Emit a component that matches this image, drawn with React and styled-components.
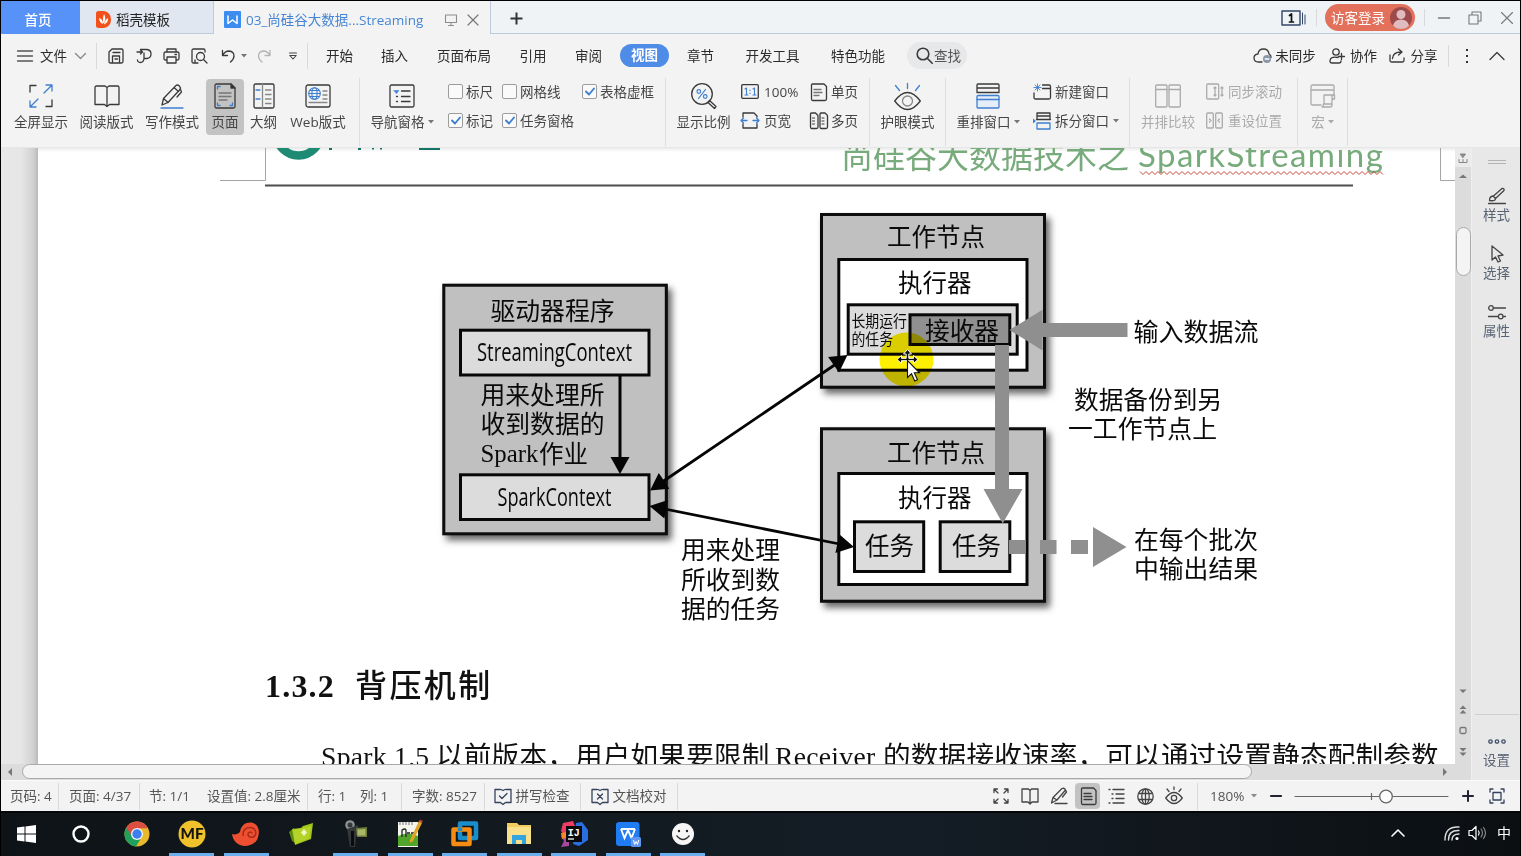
import React from "react";
import styled, { createGlobalStyle, css } from "styled-components";

const UI = `"Open Sans", "Noto Sans CJK SC", sans-serif`;
const CJK = `"Noto Sans CJK SC", sans-serif`;
const SERIF = `"Liberation Serif", "Noto Sans CJK SC", serif`;
const INK = "#454545";
const BLUE = "#3f7fd0";
const MUTED = "#ababab";

const Global = createGlobalStyle`
  * { box-sizing: border-box; }
  html, body { margin: 0; padding: 0; background: #000; overflow: hidden; }
  svg { display: block; flex: none; overflow: visible; }
`;

const Screen = styled.div`
  width: 1521px;
  height: 856px;
  padding: 1px 1px 0 1px;
  background: #000;
  display: flex;
  flex-direction: column;
  overflow: hidden;
  font-family: ${UI};
  font-size: 13.5px;
  line-height: 20px;
  color: #444;
  white-space: nowrap;
`;

/* ---------- tab bar ---------- */
const TabBar = styled.header`
  height: 33px;
  flex: none;
  display: flex;
  background: #eff3f6;
  box-shadow: inset 0 -1px 0 #bfcbdd;
`;
const HomeTab = styled.div`
  width: 79px;
  background: #5792f8;
  color: #fff;
  font-weight: 500;
  display: flex;
  align-items: center;
  justify-content: center;
  padding: 4px 5px 0 0;
`;
const TemplateTab = styled.div`
  width: 133px;
  background: #e0e7f0;
  box-shadow: inset 0 -1px 0 #bfcbdd;
  display: flex;
  align-items: center;
  gap: 5px;
  padding: 4px 0 0 16px;
  color: #222;
`;
const DocTab = styled.div`
  width: 278px;
  background: #f3f3f3;
  border: solid #bfcbdd;
  border-width: 0 1px;
  display: flex;
  align-items: center;
  padding: 4px 0 0 10px;
  color: #4786d4;
`;
const DocTitle = styled.span`
  width: 178px;
  margin: 0 21px 0 5px;
`;
const WinTools = styled.div`
  margin-left: auto;
  display: flex;
  align-items: center;
  padding-right: 7px;
`;
const Login = styled.div`
  width: 90px;
  height: 27px;
  margin: 0 9px 0 8px;
  border-radius: 14px;
  background: #e2705a;
  color: #fff;
  display: flex;
  align-items: center;
  justify-content: space-between;
  padding: 0 3px 0 6px;
`;

/* ---------- shared ---------- */
const Rule = styled.i`
  width: 1px;
  height: ${(p) => p.$h}px;
  margin-left: ${(p) => p.$ml || 0}px;
  margin-right: ${(p) => p.$mr || 0}px;
  background: #d9d9d9;
  flex: none;
`;
const Slot = styled.span`
  width: ${(p) => p.$w}px;
  margin-left: ${(p) => p.$ml || 0}px;
  display: flex;
  flex: none;
  align-items: center;
  justify-content: ${(p) => p.$j || "center"};
`;

/* ---------- menu bar ---------- */
const MenuBar = styled.nav`
  height: 43px;
  flex: none;
  display: flex;
  align-items: center;
  background: #f3f3f3;
  padding: 0 15px 0 16px;
  color: #2b2b2b;
`;
const MenuTab = styled.div`
  width: ${(p) => p.$w}px;
  flex: none;
  text-align: center;
`;
const ActiveMenu = styled(MenuTab)`
  margin: 0 3px;
  height: 23px;
  line-height: 23px;
  border-radius: 12px;
  background: #4f8ce8;
  color: #fff;
  font-weight: 700;
`;
const Search = styled.div`
  width: 60px;
  height: 27px;
  margin-left: 7px;
  border-radius: 14px;
  background: #e7e8ea;
  display: flex;
  align-items: center;
  padding-left: 9px;
  gap: 1px;
  color: #555;
`;
const MenuEnd = styled.div`
  margin-left: auto;
  display: flex;
  align-items: center;
`;

/* ---------- ribbon ---------- */
const Ribbon = styled.section`
  height: 71px;
  flex: none;
  display: flex;
  background: #f3f3f3;
  padding-left: 7px;
  border-bottom: 1px solid #e6e6e6;
`;
const RibbonButton = styled.div`
  width: ${(p) => p.$w}px;
  margin-left: ${(p) => p.$ml || 0}px;
  flex: none;
  height: 56px;
  margin-top: 2px;
  padding-top: 4px;
  border-radius: 4px;
  display: flex;
  flex-direction: column;
  align-items: center;
  color: ${(p) => (p.$off ? MUTED : INK)};
  ${(p) => p.$on && css`background: #c3c3c3;`}
`;
const IconBox = styled.div`
  height: 26px;
  display: flex;
  align-items: center;
`;
const ButtonLabel = styled.div`
  margin-top: 3px;
  display: flex;
  align-items: center;
  gap: 3px;
`;
const Stack = styled.div`
  width: ${(p) => p.$w}px;
  margin-left: ${(p) => p.$ml || 0}px;
  flex: none;
  color: ${(p) => (p.$off ? MUTED : INK)};
`;
const StackRow = styled.div`
  height: 29px;
  display: flex;
  align-items: center;
`;
const Tick = styled.span`
  width: 15px;
  height: 15px;
  margin-right: 3px;
  border: 1px solid #9c9c9c;
  border-radius: 2px;
  background: #fafafa;
  display: flex;
  align-items: center;
  justify-content: center;
`;
const GroupRule = styled.i`
  width: 1px;
  height: 68px;
  margin: 1px 0 0 ${(p) => p.$ml || 0}px;
  background: #dedede;
  flex: none;
`;

/* ---------- workspace ---------- */
const Workspace = styled.div`
  height: 632px;
  flex: none;
  display: flex;
`;
const DocColumn = styled.div`
  width: 1454px;
  display: flex;
  flex-direction: column;
`;
const Viewport = styled.main`
  height: 616px;
  display: flex;
  overflow: hidden;
  background: linear-gradient(to right, #e8e8e8 0, #e6e6e6 20px, #d2d2d2 32px, #b9b9b9 37px, #b9b9b9 38px);
`;
const Page = styled.article`
  width: 1417px;
  margin-left: 37px;
  background: #fff;
  flex: none;
  display: flex;
  flex-direction: column;
`;
const PageHeader = styled.div`
  position: relative;
  height: 42px;
  flex: none;
  overflow: hidden;
  background: linear-gradient(to bottom, #ececec 0, #fff 4px);
`;
const HeaderArt = styled.svg`
  position: absolute;
  inset: 0;
`;
const HeaderTitle = styled.div`
  display: flex;
  justify-content: flex-end;
  padding-right: 71px;
  margin-top: -17px;
  font-size: 32px;
  line-height: 46px;
  color: #78ab7c;
  font-family: ${CJK};
  font-weight: 400;
`;
const HeaderName = styled.span`
  margin-left: 9px;
  width: 246px;
  font-family: Lato, sans-serif;
  font-size: 33px;
  letter-spacing: 1.45px;
`;
const Heading = styled.h3`
  margin: 20px 0 0 227px;
  height: 52px;
  display: flex;
  align-items: center;
  font: 700 32px/52px ${SERIF};
  letter-spacing: 1.2px;
  color: #111;
`;
const HeadingText = styled.span`
  margin-left: 20px;
  letter-spacing: 2.4px;
  font-weight: 500;
`;
const Para = styled.p`
  margin: 23px 0 0 283px;
  font: 400 27.6px/44px ${SERIF};
  color: #111;
  display: flex;
`;
const Run = styled.span`
  width: ${(p) => p.$w}px;
  flex: none;
  letter-spacing: ${(p) => p.$ls || 0}px;
`;

const HScroll = styled.div`
  height: 16px;
  background: #dcdcdc;
  display: flex;
  align-items: center;
  padding: 0 6px;
`;
const HThumb = styled.div`
  width: 1230px;
  height: 15px;
  margin: 0 0 1px 9px;
  border: 1px solid #a9a9a9;
  border-radius: 8px;
  background: #f4f4f4;
`;
const VScroll = styled.div`
  width: 16px;
  background: #dcdcdc;
  display: flex;
  flex-direction: column;
  align-items: center;
`;
const RulerToggle = styled.div`
  width: 16px;
  height: 19px;
  background: #ebebeb;
  display: flex;
  align-items: center;
  justify-content: center;
`;
const VThumb = styled.div`
  width: 15px;
  height: 49px;
  margin: 39px 0 auto;
  border: 1px solid #a9a9a9;
  border-radius: 8px;
  background: #f4f4f4;
`;
const VArrow = styled.div`
  height: 21px;
  padding-top: 6px;
`;
const VSteps = styled.div`
  height: 92px;
`;
const SidePanel = styled.aside`
  width: 49px;
  background: #e8e8e8;
  border-left: 1px solid #efefef;
  display: flex;
  flex-direction: column;
  align-items: center;
  padding: 12px 0 9px 1px;
  color: #586374;
`;
const Grip = styled.div`
  width: 18px;
  height: 4px;
  border: solid #b4b4b4;
  border-width: 1px 0;
  margin-bottom: 23px;
`;
const SideTool = styled.div`
  height: 58px;
  display: flex;
  flex-direction: column;
  align-items: center;
`;
const SideIcon = styled.div`
  height: 18px;
  display: flex;
  align-items: center;
`;
const SideFoot = styled.div`
  margin-top: auto;
  width: 44px;
  height: 57px;
  border-top: 1px solid #cfcfcf;
  padding-top: 17px;
  display: flex;
  flex-direction: column;
  align-items: center;
`;

/* ---------- status bar ---------- */
const StatusBar = styled.footer`
  height: 31px;
  flex: none;
  background: #f3f3f3;
  border-top: 1px solid #fafafa;
  display: flex;
  align-items: center;
  padding: 0 15px 0 9px;
  color: #555;
  font-size: 13.5px;
`;
const Info = styled.span`
  width: ${(p) => p.$w}px;
  flex: none;
  letter-spacing: ${(p) => p.$ls || 0}px;
`;
const StatusEnd = styled.div`
  margin-left: auto;
  display: flex;
  align-items: center;
`;
const ViewMode = styled.div`
  width: 25px;
  height: 26px;
  margin-right: 3.8px;
  border-radius: 4px;
  display: flex;
  align-items: center;
  justify-content: center;
  background: ${(p) => (p.$on ? "#c3c3c3" : "transparent")};
`;

/* ---------- taskbar ---------- */
const Taskbar = styled.div`
  height: 45px;
  flex: none;
  background: linear-gradient(to right, #0e1317 0, #121a1f 500px, #141d26 900px, #0f1419 1300px, #0b0f12 100%);
  border-top: 2px solid #050607;
  display: flex;
  padding-left: 0;
`;
const TaskCell = styled.div`
  width: 54.55px;
  height: 43px;
  flex: none;
  display: flex;
  flex-direction: column;
  align-items: center;
  justify-content: space-between;
  padding-top: 5.5px;
`;
const OpenMark = styled.i`
  width: 45px;
  height: 3px;
  background: ${(p) => (p.$show ? "#6aaeee" : "transparent")};
`;
const Tray = styled.div`
  margin-left: auto;
  display: flex;
  align-items: center;
  padding: 0 9px 3px 0;
  color: #fff;
  font-size: 14px;
`;

/* ---------- small drawings ---------- */
const Ico = ({ w, h, c = "#3a3a3a", sw = 1.3, fill = "none", children }) => (
  <svg width={w} height={h} viewBox={`0 0 ${w} ${h}`} fill={fill} stroke={c} strokeWidth={sw} strokeLinecap="round" strokeLinejoin="round">
    {children}
  </svg>
);
const Caret = ({ c = "#777" }) => (
  <Ico w={6} h={4} c="none" fill={c}><path d="M0 0h6L3 3.6z" /></Ico>
);
const Box = ({ on }) => (
  <Tick>{on && <Ico w={10} h={9} c={BLUE} sw={1.9}><path d="M1 4.5l3 3L9 1.5" /></Ico>}</Tick>
);

const PenIcon = () => (
  <Ico w={26} h={26}>
    <path d="M3 22l1.500-6.500L17 2.500c2-1.500 5.500 1.500 4 4L9 19.500zM4.500 15.500l4.500 4M15 4.500l4.500 4M21.500 6.500l1 2.500-4.500 5" />
    <path d="M2 25h22" stroke={BLUE} />
  </Ico>
);
const Doc = ({ x = 0, y = 0, w = 14, h = 17 }) => (
  <path d={`M${x + 1.5} ${y}h${w - 5}l2.500 2.500v${h - 4.5}q0 1.500 -1.500 1.500h${-(w - 4)}q-1 0 -1 -1.500v${-(h - 3)}q0 -1 1 -1z`} />
);

/* ---------- diagram ---------- */
const T = ({ x, y, w, s = 24.7, children, font = CJK, weight = 400, base }) => (
  <text x={x} y={base ? y : y - 0.8 + s * 0.37} fontSize={s} textLength={w} lengthAdjust="spacingAndGlyphs" fontFamily={font} fontWeight={weight} fill="#0a0a0a">
    {children}
  </text>
);
const B = ({ x1, y1, x2, y2, fill, shadow }) => (
  <rect x={x1 + 1.5} y={y1 + 1.5} width={x2 - x1 - 3} height={y2 - y1 - 3} fill={fill} stroke="#080808" strokeWidth="3" filter={shadow ? "url(#cast)" : undefined} />
);
const Head = ({ x, y, a, l = 17, w = 19 }) => (
  <path d={`M0 0L${-l} ${-w / 2}V${w / 2}z`} transform={`translate(${x} ${y}) rotate(${a})`} fill="#050505" />
);

const Diagram = () => (
  <svg width="1417" height="450" viewBox="38 190 1417 450">
    <defs>
      <filter id="cast" x="-10%" y="-10%" width="125%" height="125%">
        <feDropShadow dx="4" dy="5" stdDeviation="3.5" floodColor="#000" floodOpacity="0.6" />
      </filter>
    </defs>
    <B x1={442.3} y1={283.7} x2={667.8} y2={535.3} fill="#c0c0c0" shadow />
    <T x={490.5} y={311.5} w={124}>驱动器程序</T>
    <B x1={459} y1={328.7} x2={650.5} y2={376.5} fill="#dcdcdc" />
    <T x={477} y={360.7} w={155} s={25} font={`"Open Sans", sans-serif`} weight={500} base>StreamingContext</T>
    <T x={480.5} y={395.5} w={124}>用来处理所</T>
    <T x={480.5} y={425} w={124}>收到数据的</T>
    <T x={480.5} y={462} w={58} s={25} font={SERIF} base>Spark</T>
    <T x={539} y={454.5} w={49}>作业</T>
    <B x1={459} y1={473.3} x2={650.5} y2={521} fill="#dcdcdc" />
    <T x={497.5} y={505.7} w={114} s={25} font={`"Open Sans", sans-serif`} weight={500} base>SparkContext</T>
    <path d="M620 376v84" stroke="#050505" strokeWidth="3" />
    <Head x={620} y={474} a={90} />

    <B x1={820} y1={213} x2={1046} y2={388.7} fill="#c0c0c0" shadow />
    <T x={887} y={238} w={98}>工作节点</T>
    <B x1={837.3} y1={258} x2={1028.5} y2={371.7} fill="#fff" />
    <T x={898} y={284} w={73.5}>执行器</T>
    <B x1={846.7} y1={303.3} x2={1018.7} y2={355.7} fill="#dcdcdc" />
    <T x={851.5} y={322} w={55.5} s={15.5}>长期运行</T>
    <T x={851.5} y={340.5} w={41.5} s={15.5}>的任务</T>
    <B x1={908.5} y1={313.3} x2={1011.3} y2={346} fill="#909090" />
    <T x={925} y={332} w={74}>接收器</T>

    <B x1={820} y1={427.3} x2={1046} y2={602.7} fill="#c0c0c0" shadow />
    <T x={887} y={453.5} w={98}>工作节点</T>
    <B x1={837.3} y1={472} x2={1028.5} y2={586} fill="#fff" />
    <T x={898} y={498.5} w={73.5}>执行器</T>
    <B x1={853} y1={520.3} x2={925.2} y2={573} fill="#dcdcdc" />
    <T x={865} y={547} w={49}>任务</T>
    <B x1={938.7} y1={520.3} x2={1011.3} y2={573} fill="#dcdcdc" />
    <T x={952} y={547} w={49}>任务</T>

    <path d="M660 483.500L836 364M662 508.500L842 544.500" stroke="#050505" strokeWidth="2.8" />
    <Head x={650} y={490.5} a={146} />
    <Head x={847.5} y={355} a={-35} />
    <Head x={649.5} y={506} a={191} />
    <Head x={854} y={547} a={11.5} />

    <g fill="#8f8f8f">
      <path d="M995 345h14v144h13.500l-19.800 34.500L983.500 489H995z" />
      <path d="M1009.500 330L1042.500 309.700V323h85v14h-85v13.500z" />
      <path d="M1009 540h16.500v14H1009zM1040 540h16.500v14H1040zM1071 540h17v14h-17zM1093 527l33.500 20-33.500 20z" />
    </g>

    <T x={1133.5} y={332.5} w={125}>输入数据流</T>
    <T x={1074} y={400.5} w={148}>数据备份到另</T>
    <T x={1068} y={430} w={149}>一工作节点上</T>
    <T x={1134} y={540.5} w={124}>在每个批次</T>
    <T x={1134} y={570} w={124}>中输出结果</T>
    <T x={681} y={551} w={99}>用来处理</T>
    <T x={681} y={580.5} w={99}>所收到数</T>
    <T x={681} y={610} w={99}>据的任务</T>

    <circle cx="906.500" cy="359.500" r="27" fill="#fdef00" style={{ mixBlendMode: "multiply" }} />
    <path d="M907.500 349.500l4 4.500h-2.700v4.300h4.700v-2.800l4.500 4-4.500 4v-2.800h-12v2.800l-4.500-4 4.500-4v2.800h4.700v-4.300h-2.700z" fill="#111" stroke="#fff" strokeWidth="1" />
    <path d="M907.500 360.500v17l4-3.700 3.200 7.200 2.800-1.300-3.200-6.900h5.200z" fill="#fff" stroke="#111" strokeWidth="1.100" />
  </svg>
);

const zig = Array.from({ length: 82 }, (_, i) => `${i ? "L" : "M"}${1102 + i * 3} ${i % 2 ? 26.5 : 23.5}`).join("");

/* ---------- taskbar icons: [running, drawing] ---------- */
const taskIcons = [
  [0, <g fill="#fff"><path d="M3 8.500l7.500-1v7H3zM11.500 7.400l10.500-1.500v8.600H11.500zM3 15.500h7.500v7l-7.500-1zM11.500 15.500H22v8.600l-10.500-1.500z" /></g>],
  [0, <circle cx="12" cy="15" r="7.500" fill="none" stroke="#fff" strokeWidth="2.400" />],
  [0, <g><circle cx="14" cy="15" r="12.500" fill="#e8b92c" /><path d="M3.200 8.700A12.500 12.500 0 0 0 13 27.500l6-10z" fill="#1fa05c" /><path d="M14 9.200H25A12.500 12.500 0 0 0 3.200 8.700L9 17z" fill="#dc4e41" /><circle cx="14" cy="15" r="6" fill="#f5f5f5" /><circle cx="14" cy="15" r="4.700" fill="#3d7ff0" /></g>],
  [1, <g><circle cx="14" cy="15" r="13.500" fill="#efc22c" /><text x="14" y="20.300" textAnchor="middle" fontFamily="Lato, sans-serif" fontWeight="900" fontSize="15.500" textLength="23" lengthAdjust="spacingAndGlyphs" fill="#15130c">MF</text></g>],
  [1, <g><path d="M0 15c3 1 6 0 8-2C9 6 14 3 19 3.500c6 .500 9 7 7.500 12.500-1 8-7 11-14.500 11C5 26 1 22 0 15z" fill="#ee4f30" /><path d="M20 14.500c0-2-4-2-4 1s5 4 7 1 0-8-5-8-8 4-6.500 8.500" fill="none" stroke="#a82c1c" strokeWidth="1.500" /></g>],
  [0, <g><path d="M2 13l5-4 3 16-5-3z" fill="#5f8a10" /><path d="M5 10l9-1 2-2 10-3-2 16-16 6z" fill="#a2c617" /><path d="M6 11l18-4-2 12-14 6z" fill="#c0dc35" opacity=".6" /><path d="M17 10l3 3.500-3 3.500-3-3.500z" fill="#f0f6c8" /></g>],
  [1, <g><circle cx="8" cy="6" r="4.800" fill="#8d9192" /><circle cx="8" cy="6" r="2.500" fill="#36393a" /><path d="M5 10l11-4 1 10-3 1-1 11H8z" fill="#34383a" /><path d="M9 12l3 0v15H9z" fill="#0a0b0c" /><path d="M14 9l11-1v10H15z" fill="#6d7a38" /><path d="M15.500 10.500l8-.500v6.500h-8z" fill="#a9b868" /></g>],
  [1, <g><path d="M2 3h20v25H2z" fill="#f4f6ee" /><path d="M2 17q10-5 20 0v10H2z" fill="#51a52a" /><path d="M4 3v3M7 3v3M10 3v3M13 3v3M16 3v3" stroke="#777" /><path d="M6 18v-7q3-2 4 0v7M11 14h3M15 14h3" fill="none" stroke="#222" strokeWidth="1.300" /><path d="M14 21L23 2l3 2-9 18-3 2z" fill="#e2a52a" /><path d="M23 2l3 2 .800-2-2.500-1.500z" fill="#c4453a" /></g>],
  [1, <g fill="none" strokeWidth="4.500" strokeLinejoin="round"><rect x="9" y="4.500" width="16" height="14.500" stroke="#1a8dcb" /><rect x="2.500" y="10.500" width="16" height="14.500" stroke="#f78c12" /><path d="M9 12V8.500" stroke="#1a8dcb" /></g>],
  [1, <g><path d="M2 4h10l2 2h12v19H2z" fill="#f1cd60" /><path d="M2 8h24v17H2z" fill="#fbe08c" /><path d="M7 25v-9h14v9h-4v-4h-6v4z" fill="#33a4dd" /></g>],
  [1, <g><path d="M3 4l10-2 3 8-10 8-5-6z" fill="#ee3d62" /><path d="M1 17l8-4v14l-8 1 3-6z" fill="#a4499b" /><path d="M16 4l6-1 6 8v10l-9 6-6-2z" fill="#2a6fe0" /><path d="M1 14l5-1v6l-4 1z" fill="#f7862b" /><rect x="6" y="7" width="16" height="16" fill="#0b0b0b" /><text x="7.800" y="16.500" fontFamily="Liberation Mono, monospace" fontWeight="700" fontSize="10" fill="#fff">IJ</text><path d="M8 20h6" stroke="#fff" strokeWidth="1.300" /></g>],
  [1, <g><rect x="2" y="3" width="23.500" height="24" rx="3" fill="#1f7cf2" /><path d="M7 10l3.500 9 3.500-8 3.500 8 3.500-9M7 10h14" fill="none" stroke="#fff" strokeWidth="1.900" /><rect x="17" y="18" width="10" height="10" rx="1.500" fill="#5e96f0" /><path d="M19.500 21l1.200 4.500 1.400-3 1.400 3 1.200-4.500" fill="none" stroke="#fff" strokeWidth="1" /></g>],
  [1, <g><circle cx="14" cy="15" r="11" fill="#f6f6f6" /><circle cx="10" cy="12" r="1.200" fill="#222" /><circle cx="18" cy="12" r="1.200" fill="#222" /><path d="M7.500 16.500q6.500 8 13 0" fill="none" stroke="#333" strokeWidth="1.300" /></g>],
];

export default function App() {
  return (
    <Screen>
      <Global />
      <TabBar>
        <HomeTab>首页</HomeTab>
        <TemplateTab>
          <Ico w={15} h={17} c="none"><path d="M0 2.500Q0 0 2.500 0H8q7 1.500 7 8.500T8 17H2.500Q0 17 0 14.500z" fill="#f2511b" /><path d="M8 3q3 5-.500 9.500Q6 9 8 3zM3 7q4 1 4 6-3.500-1-4-6zM12 7q.500 4.500-4 6.500Q8.500 9.500 12 7z" fill="#fff" /></Ico>
          <span>稻壳模板</span>
        </TemplateTab>
        <DocTab>
          <Ico w={17} h={17} c="none"><rect width="17" height="17" rx="1" fill="#3d8cf0" /><path d="M4 5v7.500L8.500 9l4.500 3.500V5" stroke="#fff" strokeWidth="1.500" fill="none" /></Ico>
          <DocTitle>03_尚硅谷大数据...Streaming</DocTitle>
          <Ico w={12} h={12} c="#8d8d8d" sw={1.1}><path d="M.500 1h11v7.500H.500zM6 8.500V11M3.500 11.500h5" /></Ico>
          <Slot $w={12} $ml={10}><Ico w={12} h={12} c="#777" sw={1.2}><path d="M1 1l10 10M11 1L1 11" /></Ico></Slot>
        </DocTab>
        <Slot $w={13} $ml={19}><Ico w={13} h={17} c="#333" sw={2}><path d="M6.500 3.500v12M.500 9.500h12" strokeLinecap="butt" /></Ico></Slot>
        <WinTools>
          <Ico w={24} h={16} c="#34466a" sw={1.4}><rect x="0" y="1" width="18" height="14" /><path d="M20.500 3v11M23 5v9" strokeWidth="1" /><path d="M7.500 5.500L9.500 4v8M7.500 12h4" stroke="#111" strokeWidth="1.700" /></Ico>
          <Rule $h={17} $ml={10} />
          <Login>访客登录
            <Ico w={22} h={22} c="none"><circle cx="11" cy="11" r="11" fill="#9d4a4c" /><circle cx="11" cy="7.500" r="4.500" fill="#e0bcc0" /><path d="M3 18.500q1.500-6 8-6t8 6q-3 3.500-8 3.500t-8-3.500z" fill="#e0bcc0" /></Ico>
          </Login>
          <Rule $h={17} $mr={13} />
          <Ico w={12} h={12} c="#777"><path d="M.500 6h11" /></Ico>
          <Slot $w={14} $ml={18}><Ico w={14} h={14} c="#777" sw={1.1}><path d="M1 4h9v9H1zM4 4V1h9v9h-3" /></Ico></Slot>
          <Slot $w={12} $ml={19}><Ico w={12} h={12} c="#777" sw={1.1}><path d="M.500.500l11 11M11.500.500l-11 11" /></Ico></Slot>
        </WinTools>
      </TabBar>

      <MenuBar>
        <Ico w={16} h={12} c="#555"><path d="M.500 1h15M.500 6h15M.500 11h15" /></Ico>
        <Slot $w={27} $ml={7}>文件</Slot>
        <Slot $w={11} $ml={8}><Ico w={11} h={6} c="#888"><path d="M.500.500l5 5 5-5" /></Ico></Slot>
        <Rule $h={26} $ml={10} />
        <Slot $w={16} $ml={11}><Ico w={16} h={16}><path d="M1 13.500V4l3-3h9.500Q15 1 15 2.500V13.500q0 1.500-1.500 1.500h-11Q1 15 1 13.500zM4.500 15V8h7v7M5 4.500h7M7 11h2.500" /></Ico></Slot>
        <Slot $w={16} $ml={12}><Ico w={16} h={16}><path d="M4.500 1.500H11q4 .500 4 4.500T11 10.500H8V5M1 4h5M4.500 2l2 2-2 2M8 10.500Q7.500 14.500 4.500 14.500T1.500 12" /></Ico></Slot>
        <Slot $w={17} $ml={11}><Ico w={17} h={16}><path d="M4 4V1h9v3M4 12H2.500Q1 12 1 10.500V5.500Q1 4 2.500 4h12Q16 4 16 5.500v5q0 1.500-1.500 1.500H13M4 9h9v6H4zM12 6.500h1.500" /></Ico></Slot>
        <Slot $w={17} $ml={11}><Ico w={17} h={16}><path d="M7 15H2.500Q1 15 1 13.500v-11Q1 1 2.500 1h10Q14 1 14 2.500V4M4 12v3" /><circle cx="9.500" cy="8.500" r="4" /><path d="M12.500 11.500l3.500 3.500" /></Ico></Slot>
        <Slot $w={15} $ml={13}><Ico w={15} h={14}><path d="M1.500 1.500v5h5M1.500 6.500Q4 2 8 2q5 .500 5 5 0 3-3.500 6" /></Ico></Slot>
        <Slot $w={7} $ml={4}><Caret /></Slot>
        <Slot $w={14} $ml={10}><Ico w={14} h={14} c="#b4b4b4"><path d="M13 1.500v5H8M13 6.500Q10.500 2 6.500 2q-5 .500-5 5 0 3 3.500 6" /></Ico></Slot>
        <Slot $w={10} $ml={17}><Ico w={8} h={8} c="#444" sw={1.1}><path d="M.500 1h7M.800 3.500h6.400L4 7z" /></Ico></Slot>
        <Rule $h={26} $ml={9} $mr={4} />
        <MenuTab $w={55}>开始</MenuTab>
        <MenuTab $w={55}>插入</MenuTab>
        <MenuTab $w={84}>页面布局</MenuTab>
        <MenuTab $w={54}>引用</MenuTab>
        <MenuTab $w={57}>审阅</MenuTab>
        <ActiveMenu $w={49}>视图</ActiveMenu>
        <MenuTab $w={57}>章节</MenuTab>
        <MenuTab $w={87}>开发工具</MenuTab>
        <MenuTab $w={84}>特色功能</MenuTab>
        <Search><Ico w={17} h={17} sw={1.6}><circle cx="7" cy="7" r="5.800" /><path d="M11.200 11.200l5 5" /></Ico>查找</Search>
        <MenuEnd>
          <Ico w={19} h={15}><path d="M9 14H5.500Q1 14 1 10q0-3.500 4-4 .500-5 5.500-5T16 6q2 1 2 3.500" /><circle cx="14" cy="11" r="4" fill="#8b97ab" stroke="none" /><path d="M12.200 11h3.600" stroke="#fff" /></Ico>
          <Slot $w={41} $ml={3.5}>未同步</Slot>
          <Slot $w={16} $ml={13}><Ico w={16} h={16}><circle cx="7" cy="4" r="3.200" /><path d="M9 9.500Q1 8 1 13q0 2 2 2h7q2 0 2-2M12.500 5.500v6M9.500 8.500h6" /></Ico></Slot>
          <Slot $w={27} $ml={5}>协作</Slot>
          <Slot $w={17} $ml={12}><Ico w={17} h={15}><path d="M1 7v5.500Q1 14 2.500 14h11q1.500 0 1.500-1.500V10M3.500 10.500Q4 4 12 4M9.500 1L13 4 9.500 7" /></Ico></Slot>
          <Slot $w={27} $ml={4.5}>分享</Slot>
          <Rule $h={22} $ml={10.5} />
          <Slot $w={4} $ml={16}><Ico w={4} h={14} c="none" fill="#333"><path d="M1 0h2v2H1zM1 6h2v2H1zM1 12h2v2H1z" /></Ico></Slot>
          <Slot $w={16} $ml={20}><Ico w={16} h={8}><path d="M1 7.500l7-7 7 7" /></Ico></Slot>
        </MenuEnd>
      </MenuBar>

      <Ribbon>
        <RibbonButton $w={66}>
          <IconBox><Ico w={24} h={24}><path d="M1 8V1.500h6M23 16v6.500h-6" /><path d="M15 9l8-8M17 1h6v6M9 15l-8 8M1 17v6h6" stroke={BLUE} /></Ico></IconBox>
          <ButtonLabel>全屏显示</ButtonLabel>
        </RibbonButton>
        <RibbonButton $w={65}>
          <IconBox><Ico w={26} h={24}><path d="M2.500 2H11l2 1.500L15 2h8.500Q25 2 25 3.500v17H15.500L13 22.500 10.500 20.500H1v-17Q1 2 2.500 2zM13 3.500v19" /></Ico></IconBox>
          <ButtonLabel>阅读版式</ButtonLabel>
        </RibbonButton>
        <RibbonButton $w={66}>
          <IconBox><PenIcon /></IconBox>
          <ButtonLabel>写作模式</ButtonLabel>
        </RibbonButton>
        <RibbonButton $w={38} $ml={1} $on>
          <IconBox><Ico w={22} h={26}><path d="M2.500 1H17l4 4v18.500q0 1.500-1.500 1.500h-17Q1 25 1 23.500v-21Q1 1 2.500 1z" /><path d="M17 1v4h4z" fill="#222" /><path d="M5 10h12M5 13.500h12M5 17h8" stroke="#777" /><path d="M3.500 6V3.500H6M3.500 20v2.500H6M16 22.500h2.500V20" stroke={BLUE} /></Ico></IconBox>
          <ButtonLabel>页面</ButtonLabel>
        </RibbonButton>
        <RibbonButton $w={39}>
          <IconBox><Ico w={22} h={26}><rect x="1" y="1" width="20" height="24" rx="1.500" /><path d="M9.500 1v24" stroke="#888" /><path d="M3 7h4M3 16h4" stroke={BLUE} /><path d="M12.500 7h5.500M12.500 11.500h5.500M12.500 16h5.500M12.500 20.500h5.500" stroke="#888" /></Ico></IconBox>
          <ButtonLabel>大纲</ButtonLabel>
        </RibbonButton>
        <RibbonButton $w={70}>
          <IconBox><Ico w={26} h={24}><rect x="1" y="1" width="24" height="22" rx="2" /><g stroke={BLUE} strokeWidth="1.100"><circle cx="9.500" cy="9.500" r="5.800" /><ellipse cx="9.500" cy="9.500" rx="2.600" ry="5.800" /><path d="M4 9.500h11M5 6.500h9M5 12.500h9" /></g><path d="M18 7h4M18 11h4M4 18.500h18M18 15h4" stroke="#888" /></Ico></IconBox>
          <ButtonLabel>Web版式</ButtonLabel>
        </RibbonButton>
        <GroupRule $ml={6} />
        <RibbonButton $w={84}>
          <IconBox><Ico w={26} h={24}><rect x="1" y="1" width="24" height="22" rx="1.500" /><path d="M5 6.500h5L7.500 9.500z" fill={BLUE} stroke={BLUE} strokeWidth=".5" /><path d="M12.500 7H21M7.500 12.500h1M12.500 12.500H21M7.500 17.500h1M12.500 17.500H21" /></Ico></IconBox>
          <ButtonLabel>导航窗格<Caret /></ButtonLabel>
        </RibbonButton>
        <Stack $w={54} $ml={4}>
          <StackRow><Box />标尺</StackRow>
          <StackRow><Box on />标记</StackRow>
        </Stack>
        <Stack $w={80}>
          <StackRow><Box />网格线</StackRow>
          <StackRow><Box on />任务窗格</StackRow>
        </Stack>
        <Stack $w={83}>
          <StackRow><Box on />表格虚框</StackRow>
        </Stack>
        <GroupRule />
        <RibbonButton $w={75}>
          <IconBox><Ico w={26} h={26}><circle cx="11" cy="11" r="10.300" /><path d="M18.500 17.500l6.500 6-1.500 2-6.500-6z" /><g stroke={BLUE} strokeWidth="1.200"><path d="M14.500 6.500l-7 9" /><circle cx="7.800" cy="8.500" r="1.800" /><circle cx="14.200" cy="13.500" r="1.800" /></g></Ico></IconBox>
          <ButtonLabel>显示比例</ButtonLabel>
        </RibbonButton>
        <Stack $w={68}>
          <StackRow><Slot $w={23} $j="flex-start"><Ico w={18} h={15}><rect x=".700" y=".700" width="16.600" height="13.600" rx="1" /><g stroke={BLUE} strokeWidth="1.100"><path d="M4 5l1.500-1v7M4 11h3M12 5l1.500-1v7M12 11h3M9 6v.500M9 9v.500" /></g></Ico></Slot>100%</StackRow>
          <StackRow><Slot $w={23} $j="flex-start"><Ico w={18} h={17}><path d="M2 5V1h11l3 3v1M2 12v4h14v-4" /><path d="M0 8.500h6M2.500 6L0 8.500 2.500 11M18 8.500h-6M15.500 6L18 8.500 15.500 11" stroke={BLUE} /></Ico></Slot>页宽</StackRow>
        </Stack>
        <Stack $w={59} $ml={1}>
          <StackRow><Slot $w={21} $j="flex-start"><Ico w={16} h={18}><Doc x={1} y={1} w={16.5} h={17} /><path d="M4 6.500h7M4 9.500h8M4 12.500h5" stroke="#777" /></Ico></Slot>单页</StackRow>
          <StackRow><Slot $w={21} $j="flex-start"><Ico w={17} h={17}><Doc x={0} y={1} w={9} h={16} /><Doc x={9.5} y={1} w={9} h={16} /><path d="M2.500 6h2M2.500 9h2M2.500 12h2M12 6h2M12 9h2M12 12h2" stroke="#777" /></Ico></Slot>多页</StackRow>
        </Stack>
        <GroupRule />
        <RibbonButton $w={75}>
          <IconBox><Ico w={27} h={27}><path d="M.700 18q12.800-17 25.600 0-12.800 17-25.600 0z" /><circle cx="13.500" cy="18" r="5" stroke="#888" /><path d="M1.500 2.500l4 5M13.500.500v5M25.500 2.500l-4 5" stroke={BLUE} /></Ico></IconBox>
          <ButtonLabel>护眼模式</ButtonLabel>
        </RibbonButton>
        <GroupRule />
        <RibbonButton $w={84}>
          <IconBox><Ico w={24} h={26}><path d="M1 9.500V2q0-1 1-1h20q1 0 1 1v7.500M1 5h22M1 9.500h22" /><g stroke={BLUE}><rect x="1" y="12.500" width="22" height="12.500" rx="1" fill="#e4edf8" /><path d="M1 16.500h22" /></g></Ico></IconBox>
          <ButtonLabel>重排窗口<Caret /></ButtonLabel>
        </RibbonButton>
        <Stack $w={96} $ml={3}>
          <StackRow><Slot $w={22} $j="flex-start"><Ico w={18} h={16}><path d="M9.500 1H16q1.500 0 1.500 1.500v11q0 1.500-1.500 1.500H2.500Q1 15 1 13.500V9M9.500 4.500h8" /><path d="M4.500 0v7M1 3.500h7M2 1l5 5M7 1L2 6" stroke={BLUE} strokeWidth=".9" /></Ico></Slot>新建窗口</StackRow>
          <StackRow><Slot $w={22} $j="flex-start"><Ico w={18} h={18}><path d="M4 7.500V1h13v6.500M4 4h13M3.500 7.500h14" /><path d="M4 11h13v6H4z" stroke={BLUE} /><path d="M0 6.500l3 2.500-3 2.500z" fill={BLUE} stroke="none" /></Ico></Slot>拆分窗口<Slot $w={6} $ml={4}><Caret /></Slot></StackRow>
        </Stack>
        <GroupRule />
        <RibbonButton $w={76} $off>
          <IconBox><Ico w={26} h={24} c={MUTED}><rect x=".700" y="1" width="11.300" height="22" rx="1" /><rect x="14" y="1" width="11.300" height="22" rx="1" /><path d="M1 5.500h11M14 5.500h11" /></Ico></IconBox>
          <ButtonLabel>并排比较</ButtonLabel>
        </RibbonButton>
        <Stack $w={91} $off>
          <StackRow><Slot $w={22} $j="flex-start"><Ico w={17} h={17} c={MUTED}><rect x=".700" y="1" width="12" height="15" rx="1" /><path d="M9 4v9M8 5l1-1 1 1M8 12l1 1 1-1M16 4v9M15 5l1-1 1 1M15 12l1 1 1-1" /></Ico></Slot>同步滚动</StackRow>
          <StackRow><Slot $w={22} $j="flex-start"><Ico w={17} h={17} c={MUTED}><rect x=".700" y="1" width="6.600" height="15" rx="1" /><rect x="9.700" y="1" width="6.600" height="15" rx="1" /><path d="M3.500 7L5 8.500 3.500 10M13.500 7L12 8.500l1.500 1.500" /></Ico></Slot>重设位置</StackRow>
        </Stack>
        <GroupRule />
        <RibbonButton $w={49} $off>
          <IconBox><Ico w={25} h={24} c={MUTED}><path d="M11 21H2.500Q1 21 1 19.500v-17Q1 1 2.500 1h20Q24 1 24 2.500V11M1 6h23" /><path d="M14 20v-9h10.500M22 11v10q0 2-2 2h-8q1.500-.500 1.500-3H22M22 15h2.500v-4" /></Ico></IconBox>
          <ButtonLabel>宏<Caret c="#aaa" /></ButtonLabel>
        </RibbonButton>
        <GroupRule />
      </Ribbon>

      <Workspace>
        <DocColumn>
          <Viewport>
            <Page>
              <PageHeader>
                <HeaderTitle>尚硅谷大数据技术之<HeaderName>SparkStreaming</HeaderName></HeaderTitle>
                <HeaderArt width="1417" height="42" viewBox="0 0 1417 42" fill="none">
                  <path d="M182 32.500h45.500V0M1417 32.500h-14.500V0" stroke="#a5a5a5" />
                  <path d="M227 37.500h1088" stroke="#4d4d4d" strokeWidth="2" />
                  <circle cx="260.500" cy="-14.500" r="22" stroke="#1e8a74" strokeWidth="8.500" />
                  <path d="M291 1h3M320 1h3M334 .500h2M342 .500h2M381 1h21" stroke="#147567" strokeWidth="2" />
                  <path d={zig} stroke="#c7493a" strokeWidth="1" />
                </HeaderArt>
              </PageHeader>
              <Diagram />
              <Heading>1.3.2<HeadingText>背压机制</HeadingText></Heading>
              <Para>
                <Run $w={115} $ls={0.3}>Spark 1.5</Run>
                <Run $w={339} $ls={0.2}>以前版本，用户如果要限制</Run>
                <Run $w={108} $ls={0.3}>Receiver</Run>
                <Run $w={580} $ls={0.2}>的数据接收速率，可以通过设置静态配制参数</Run>
              </Para>
            </Page>
          </Viewport>
          <HScroll>
            <Ico w={6} h={8} c="none" fill="#777"><path d="M5 0v8L1 4z" /></Ico>
            <HThumb />
            <Slot $w={6} $ml={190}><Ico w={6} h={8} c="none" fill="#777"><path d="M1 0v8l4-4z" /></Ico></Slot>
          </HScroll>
        </DocColumn>
        <VScroll>
          <RulerToggle><Ico w={10} h={10} c="#888" sw={1}><path d="M2.500 1h5L5 4.500z" fill="#888" /><path d="M1 6.500v3h8v-3M5 6.500v3" /></Ico></RulerToggle>
          <VArrow><Ico w={8} h={8} c="none" fill="#777"><path d="M0 5h8L4 1.500z" /></Ico></VArrow>
          <VThumb />
          <VSteps>
            <Ico w={10} h={92} c="none" fill="#777">
              <path d="M1.500 1.500h7L5 5zM1.500 21L5 17.500 8.500 21zM1.500 25.500L5 22l3.500 3.500zM1.500 60H8.500L5 63.500zM1.500 64.500H8.500L5 68z" />
              <rect x="2" y="39.500" width="6" height="6" rx="1.500" fill="none" stroke="#777" />
            </Ico>
          </VSteps>
        </VScroll>
        <SidePanel>
          <Grip />
          <SideTool>
            <SideIcon><Ico w={18} h={18} c="#444"><path d="M1.500 13.500q0-4 3.500-4.500l2.500 2.500q0 3-6 2zM5.500 9L14 1.500q2.500-.500 2 2L7.500 11.500M.500 16.500h17" /></Ico></SideIcon>
            <span>样式</span>
          </SideTool>
          <SideTool>
            <SideIcon><Ico w={16} h={18} c="#444"><path d="M3 1l11 9-5 1 2.500 5-2.500 1-2.500-5L3 15z" /></Ico></SideIcon>
            <span>选择</span>
          </SideTool>
          <SideTool>
            <SideIcon><Ico w={18} h={14} c="#444"><circle cx="3" cy="3" r="2.300" /><path d="M6 3h11.500M.500 11.500H10M15.500 11.500h2" /><circle cx="12.700" cy="11.500" r="2.300" /></Ico></SideIcon>
            <span>属性</span>
          </SideTool>
          <SideFoot>
            <SideIcon><Ico w={18} h={5} c="#44506a"><circle cx="2.500" cy="2.500" r="1.700" /><circle cx="9" cy="2.500" r="1.700" /><circle cx="15.500" cy="2.500" r="1.700" /></Ico></SideIcon>
            <span>设置</span>
          </SideFoot>
        </SidePanel>
      </Workspace>

      <StatusBar>
        <Info $w={42}>页码: 4</Info><Rule $h={27} $ml={6} $mr={10} />
        <Info $w={63}>页面: 4/37</Info><Rule $h={27} $ml={7} $mr={9} />
        <Info $w={58}>节: 1/1</Info>
        <Info $w={94}>设置值: 2.8厘米</Info><Rule $h={27} $ml={6} $mr={10} />
        <Info $w={42}>行: 1</Info><Info $w={27}>列: 1</Info><Rule $h={27} $ml={14} $mr={10} />
        <Info $w={66}>字数: 8527</Info><Rule $h={27} $ml={6} $mr={9} />
        <Ico w={18} h={17} c="#34425c"><path d="M6 1.500H1v13h5.500L9 16.500l2.500-2H17v-13h-5M7 1.500l2 1 2-1M5.500 8l2.500 2.500 5-5" /></Ico>
        <Info $w={66}>&nbsp;拼写检查</Info><Rule $h={27} $ml={2} $mr={10} />
        <Ico w={18} h={17} c="#34425c"><path d="M6 1.500H1v13h5.500L9 16.500l2.500-2H17v-13h-5M7 1.500l2 1 2-1M6.500 6l5 5M11.500 6l-5 5" /></Ico>
        <Info $w={66}>&nbsp;文档校对</Info><Rule $h={27} $ml={2} />
        <StatusEnd>
          <ViewMode><Ico w={16} h={16} c="#444"><path d="M1 4.500V1h3.500M1 1l4 4M15 4.500V1h-3.500M15 1l-4 4M1 11.500V15h3.500M1 15l4-4M15 11.500V15h-3.500M15 15l-4-4" /></Ico></ViewMode>
          <ViewMode><Ico w={18} h={18} c="#444"><path d="M1 2h6.500L9 3.500 10.500 2H17v13h-6l-2 2-2-2H1zM9 3.500V17" /></Ico></ViewMode>
          <ViewMode><Ico w={18} h={18} c="#444"><path d="M1.500 16l1.500-5.500L12 1.500q2.500-1 3.500 1.500L7 13zM3 10.500L7 13M5 16.500h12M15.500 3l1 2-4 5" /></Ico></ViewMode>
          <ViewMode $on><Ico w={16} h={18}><Doc x={1} y={1} w={16} h={17} /><path d="M4 6.500h7M4 9.500h8M4 12.500h8" /></Ico></ViewMode>
          <ViewMode><Ico w={17} h={17} c="#444"><path d="M1 1.500h1M5 1.500h11M4 6h1M8 6h8M4 10.500h1M8 10.500h8M1 15h1M5 15h11" /></Ico></ViewMode>
          <ViewMode><Ico w={17} h={17} c="#444"><circle cx="8.500" cy="8.500" r="7.700" /><ellipse cx="8.500" cy="8.500" rx="3.700" ry="7.700" /><path d="M2 5.500h13M2 11.500h13M8.500 1v15" /></Ico></ViewMode>
          <ViewMode><Ico w={18} h={18} c="#444"><path d="M.700 11q8.300-11 16.600 0-8.300 11-16.600 0z" /><circle cx="9" cy="11" r="2.700" /><path d="M2 2l2 2.500M9 0v2.500M16 2l-2 2.500" /></Ico></ViewMode>
          <Rule $h={27} $ml={6.5} $mr={12} />
          <Info $w={36}>180%</Info>
          <Slot $w={6} $ml={5}><Caret c="#888" /></Slot>
          <Slot $w={12} $ml={13}><Ico w={12} h={4} c="#223"><path d="M1 2h10" strokeWidth="2.200" /></Ico></Slot>
          <Slot $w={154} $ml={13}><Ico w={154} h={16} c="#666"><path d="M0 8.500h84M98 8.500h55" strokeWidth="1" /><path d="M76.500 5.500v6" strokeWidth="1.200" /><circle cx="91" cy="8.500" r="6.300" fill="#fff" /></Ico></Slot>
          <Slot $w={12} $ml={12.5}><Ico w={12} h={12} c="#223"><path d="M1 6h10M6 1v10" strokeWidth="2" /></Ico></Slot>
          <Slot $w={16} $ml={15.5}><Ico w={16} h={16} c="#34425c"><path d="M1 4V1h3M12 1h3v3M15 12v3h-3M4 15H1v-3M4 4.500h8v7.500H4z" /></Ico></Slot>
        </StatusEnd>
      </StatusBar>

      <Taskbar>
        {taskIcons.map(([open, art], i) => (
          <TaskCell key={i}>
            <svg width="28" height="30" viewBox="0 0 28 30">{art}</svg>
            <OpenMark $show={open} />
          </TaskCell>
        ))}
        <Tray>
          <Ico w={14} h={8} c="#fff" sw={1.6}><path d="M1 7l6-6 6 6" /></Ico>
          <Slot $w={16} $ml={39}><Ico w={16} h={16} c="#ddd" sw={1.4}><path d="M1 15Q1 1 15 2M4.500 15Q4.500 5 15 5.500M8 15Q8 9 15 9" /><circle cx="13" cy="13.500" r="1.600" fill="#fff" stroke="none" /></Ico></Slot>
          <Slot $w={18} $ml={8}><Ico w={18} h={16} c="#fff" sw={1.2}><path d="M1 5.500h3l4-4v13l-4-4H1zM10.500 6q1.500 2 0 4" /><path d="M13 4q3 4 0 8M15.500 2.500q4 5.500 0 11" stroke="#888" /></Ico></Slot>
          <Slot $w={14} $ml={11}>中</Slot>
        </Tray>
      </Taskbar>
    </Screen>
  );
}
